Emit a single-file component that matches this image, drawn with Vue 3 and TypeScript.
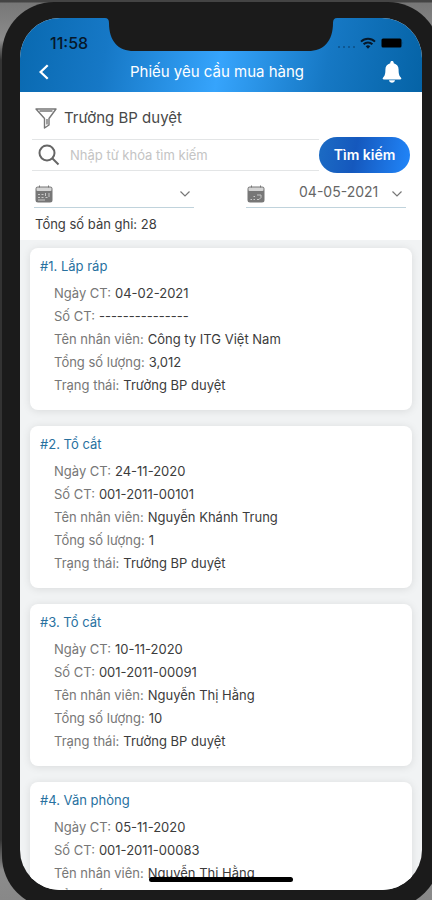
<script setup lang="ts">
import { ref } from 'vue'

interface PurchaseRequest {
  id: number
  title: string
  date: string
  code: string
  employee: string
  quantity: string
  status: string
}

const keyword = ref('')
const fromDate = ref('')
const toDate = ref('04-05-2021')
const total = 28

const requests: PurchaseRequest[] = [
  { id: 1, title: 'Lắp ráp', date: '04-02-2021', code: '---------------', employee: 'Công ty ITG Việt Nam', quantity: '3,012', status: 'Trưởng BP duyệt' },
  { id: 2, title: 'Tổ cắt', date: '24-11-2020', code: '001-2011-00101', employee: 'Nguyễn Khánh Trung', quantity: '1', status: 'Trưởng BP duyệt' },
  { id: 3, title: 'Tổ cắt', date: '10-11-2020', code: '001-2011-00091', employee: 'Nguyễn Thị Hằng', quantity: '10', status: 'Trưởng BP duyệt' },
  { id: 4, title: 'Văn phòng', date: '05-11-2020', code: '001-2011-00083', employee: 'Nguyễn Thị Hằng', quantity: '1', status: 'Trưởng BP duyệt' },
]
</script>

<template>
  <div class="stage">
    <div class="phone">
      <div class="screen">
        <header class="header">
          <div class="status">
            <span class="clock">11:58</span>
            <div class="signals">
              <svg class="dots" viewBox="0 0 18 4" aria-hidden="true">
                <circle cx="2" cy="2" r="1" /><circle cx="7" cy="2" r="1" /><circle cx="12" cy="2" r="1" /><circle cx="17" cy="2" r="1" />
              </svg>
              <svg class="wifi" viewBox="0 0 16 12" aria-hidden="true">
                <path d="M1 4.6a10 10 0 0 1 14 0M3.600 7.300a6.200 6.200 0 0 1 8.800 0" />
                <path class="fill" d="M5.700 9.300a3.300 3.300 0 0 1 4.600 0L8 11.800z" />
              </svg>
              <svg class="battery" viewBox="0 0 23 10" aria-hidden="true">
                <rect x="0.5" y="0.5" width="20" height="9" rx="1.500" /><path class="tip" d="M21.500 3.500q1.400 1.500 0 3z" />
              </svg>
            </div>
          </div>
          <div class="navbar">
            <button class="icon-button" type="button" aria-label="Quay lại">
              <svg class="back" viewBox="0 0 12 16" aria-hidden="true"><path d="M9.300 2 3 8l6.300 6" /></svg>
            </button>
            <h1 class="title">Phiếu yêu cầu mua hàng</h1>
            <button class="icon-button" type="button" aria-label="Thông báo">
              <svg class="bell" viewBox="0 0 20 24" aria-hidden="true">
                <path d="M10 1c1 0 1.700.7 1.700 1.700v.5c3.200.8 4.900 3.200 4.900 6.300 0 5 .8 6.600 2.300 8 .9.9.4 2-.8 2H1.900c-1.200 0-1.700-1.100-.8-2 1.500-1.400 2.300-3 2.300-8 0-3.100 1.700-5.500 4.900-6.300v-.5C8.300 1.700 9 1 10 1z" />
                <path d="M7 20.300h6c-.2 1.500-1.400 2.500-3 2.500s-2.800-1-3-2.500z" />
              </svg>
            </button>
          </div>
        </header>

        <section class="filters">
          <button class="state" type="button">
            <svg class="funnel" viewBox="0 0 22 21" aria-hidden="true"><path d="M1 1h20l-7 9.500V17l-4.500 3v-9.500zM4.500 3h13M12 11v5.500" /></svg>
            <span>Trưởng BP duyệt</span>
          </button>
          <form class="search" @submit.prevent>
            <div class="search-box">
              <svg class="lens" viewBox="0 0 22 22" aria-hidden="true"><circle cx="9" cy="9" r="7.500" /><path d="m14.500 14.500 6 6" /></svg>
              <input v-model="keyword" class="keyword" type="text" aria-label="Từ khóa" placeholder="Nhập từ khóa tìm kiếm" />
            </div>
            <button class="submit" type="submit">Tìm kiếm</button>
          </form>
          <div class="dates">
            <label class="date">
              <svg class="calendar" viewBox="0 0 18 18" aria-hidden="true">
                <rect class="sheet" x="0.500" y="1.500" width="17" height="16" rx="2.500" /><rect class="top" x="1.500" y="2.500" width="15" height="3.500" rx="1" />
                <path class="pins" d="M4.500 0.500v2M13.500 0.500v2" /><path class="days" d="M3 9.500h2M6.500 9.500h2M10.500 8v3M14 8v4M3 12.500h2M6.500 12.500h2M10.500 12.500h2M3 15h7" />
              </svg>
              <select v-model="fromDate" class="picker" aria-label="Từ ngày"><option value=""></option></select>
              <svg class="chevron" viewBox="0 0 12 8" aria-hidden="true"><path d="m1.500 1.500 4.500 4.500 4.500-4.500" /></svg>
            </label>
            <label class="date">
              <svg class="calendar" viewBox="0 0 18 18" aria-hidden="true">
                <rect class="sheet" x="0.500" y="1.500" width="17" height="16" rx="2.500" /><rect class="top" x="1.500" y="2.500" width="15" height="3.500" rx="1" />
                <path class="pins" d="M4.500 0.500v2M13.500 0.500v2" /><path class="days" d="M3.500 14.500H5M6.500 14.500H8M6.500 11.500h1.500M10 10h4v2.500L12 14.500h-2" />
              </svg>
              <select v-model="toDate" class="picker" aria-label="Đến ngày"><option>04-05-2021</option></select>
              <svg class="chevron" viewBox="0 0 12 8" aria-hidden="true"><path d="m1.500 1.500 4.500 4.500 4.500-4.500" /></svg>
            </label>
          </div>
          <p class="total">Tổng số bản ghi: {{ total }}</p>
        </section>

        <main class="list">
          <article v-for="item in requests" :key="item.id" class="card">
            <h2 class="card-title">#{{ item.id }}. {{ item.title }}</h2>
            <dl class="fields">
              <div class="field"><dt>Ngày CT:</dt><dd>{{ item.date }}</dd></div>
              <div class="field"><dt>Số CT:</dt><dd>{{ item.code }}</dd></div>
              <div class="field"><dt>Tên nhân viên:</dt><dd>{{ item.employee }}</dd></div>
              <div class="field"><dt>Tổng số lượng:</dt><dd>{{ item.quantity }}</dd></div>
              <div class="field"><dt>Trạng thái:</dt><dd>{{ item.status }}</dd></div>
            </dl>
          </article>
        </main>
        <svg class="notch" viewBox="0 0 236 35" aria-hidden="true">
          <path d="M0 0v1h2q4 0 4 5c0 18 9 28 25 28h174c16 0 25-10 25-28q0-5 4-5h2V0z" />
        </svg>
        <span class="home-bar"></span>
      </div>
    </div>
  </div>
</template>

<style>
body {
  margin: 0;
}
</style>

<style scoped>
.stage {
  box-sizing: border-box;
  height: 100vh;
  overflow: hidden;
  padding: 2px 0 0 2px;
  background: linear-gradient(#444 0, #444 2px, #777 3px, #8c8c8c 40px, #333 60px, #333 840px, #8c8c8c 870px, #888 100%);
  font-family: Inter, "Liberation Sans", sans-serif;
  color: #3c3c3c;
}

.phone {
  box-sizing: border-box;
  width: calc(100% + 8px);
  height: calc(100vh + 6px);
  padding: 16px 18px 18px;
  border-radius: 52px;
  background: #1b1b1b;
}

.screen {
  position: relative;
  display: flex;
  flex-direction: column;
  height: 100%;
  overflow: hidden;
  border-radius: 40px;
  background: #f1f3f4;
}

.header {
  flex: none;
  background: linear-gradient(100deg, #0969b0 0%, #1678c6 22%, #36a4fc 50%, #1678c4 76%, #0563a6 100%);
  color: #fff;
}

.status {
  display: flex;
  align-items: center;
  justify-content: space-between;
  height: 34px;
  padding: 16px 18px 0 30px;
  box-sizing: border-box;
  color: #06182a;
}

.clock {
  font-size: 16px;
  font-weight: 500;
  line-height: 18px;
}

.signals {
  display: flex;
  align-items: center;
  gap: 5px;
}

.dots {
  width: 18px;
  height: 4px;
  margin-top: 8px;
  fill: #0d4f86;
}

.wifi {
  width: 16px;
  height: 12px;
  fill: none;
  stroke: #06182a;
  stroke-width: 2;
}

.wifi .fill {
  fill: #06182a;
  stroke: none;
}

.battery {
  width: 23px;
  height: 10px;
  fill: #000;
}

.battery .tip {
  fill: #0d4f86;
}

.navbar {
  display: flex;
  align-items: center;
  justify-content: space-between;
  height: 40px;
  padding: 0 20px 0 16px;
}

.icon-button {
  display: flex;
  padding: 0;
  border: 0;
  background: none;
}

.back {
  width: 16px;
  height: 18px;
  fill: none;
  stroke: #fff;
  stroke-width: 2;
}

.bell {
  width: 20px;
  height: 24px;
  fill: #fff;
}

.title {
  margin: 0;
  font-size: 15px;
  font-weight: 400;
  line-height: 20px;
}

.filters {
  flex: none;
  padding: 12px 12px 6px;
  background: #fff;
}

.state {
  display: flex;
  align-items: center;
  gap: 7px;
  padding: 0 0 0 3px;
  border: 0;
  background: none;
  color: #484848;
  font: 400 15px/28px Inter, "Liberation Sans", sans-serif;
}

.funnel {
  width: 22px;
  height: 21px;
  fill: none;
  stroke: #777;
  stroke-width: 1.4;
  stroke-linejoin: round;
}

.search {
  display: flex;
  align-items: center;
  height: 36px;
  margin-top: 5px;
}

.search-box {
  display: flex;
  flex: 1;
  align-items: center;
  gap: 10px;
  height: 30px;
  padding-left: 6px;
  border: solid #e3e5e6;
  border-width: 1px 0;
}

.lens {
  flex: none;
  width: 22px;
  height: 22px;
  fill: none;
  stroke: #666;
  stroke-width: 2;
}

.keyword {
  flex: 1;
  min-width: 0;
  padding: 0;
  border: 0;
  outline: 0;
  background: none;
  font: 400 13px/20px Inter, "Liberation Sans", sans-serif;
}

.keyword::placeholder {
  color: #c4c4c4;
}

.submit {
  width: 91px;
  height: 36px;
  padding: 0;
  border: 0;
  border-radius: 18px;
  background: linear-gradient(100deg, #1c6cc4, #1558bd 40%, #2186fa);
  color: #fff;
  font: 600 14px/20px Inter, "Liberation Sans", sans-serif;
}

.dates {
  display: flex;
  justify-content: space-between;
  gap: 52px;
  margin-top: 8px;
  padding: 0 4px 0 2px;
}

.date {
  display: grid;
  flex: 1;
  grid-template-columns: 20px 1fr 18px;
  align-items: center;
  height: 26px;
  border-bottom: 1px solid #c0d3dc;
}

.calendar {
  grid-area: 1 / 1;
  width: 18px;
  height: 18px;
  margin-left: 1px;
  fill: none;
}

.calendar .sheet {
  fill: #777;
}

.calendar .top {
  fill: #d4d4d4;
}

.calendar .pins {
  stroke: #777;
}

.calendar .days {
  stroke: #c8c8c8;
}

.picker {
  grid-area: 1 / 2 / 2 / 4;
  width: 100%;
  padding: 0 0 4px 33px;
  border: 0;
  outline: 0;
  appearance: none;
  background: none;
  color: #666;
  font: 400 14px/20px Inter, "Liberation Sans", sans-serif;
}

.chevron {
  grid-area: 1 / 3;
  justify-self: center;
  width: 12px;
  height: 8px;
  fill: none;
  stroke: #777;
  stroke-width: 1.2;
  pointer-events: none;
}

.total {
  margin: 6px 0 0 3px;
  font-size: 13px;
  line-height: 20px;
}

.list {
  display: flex;
  flex: 1;
  flex-direction: column;
  gap: 16px;
  min-height: 0;
  overflow: hidden;
  padding: 8px 10px;
}

.card {
  box-sizing: border-box;
  flex: none;
  padding: 8px 10px 13px;
  border-radius: 8px;
  background: #fff;
  box-shadow: 0 1px 8px rgba(0, 0, 0, 0.1);
}

.card-title {
  margin: 0 0 6px;
  color: #28719f;
  font-size: 13px;
  font-weight: 400;
  line-height: 20px;
}

.fields {
  margin: 0;
  padding-left: 14px;
}

.field {
  display: flex;
  gap: 4px;
  font-size: 13px;
  line-height: 23px;
}

.field dt {
  color: #777;
}

.field dd {
  margin: 0;
}

.notch {
  position: absolute;
  top: -1px;
  left: 50%;
  width: 236px;
  height: 35px;
  margin-left: -118px;
  fill: #1b1b1b;
}

.home-bar {
  position: absolute;
  bottom: 8px;
  left: 50%;
  width: 144px;
  height: 5px;
  margin-left: -72px;
  border-radius: 3px;
  background: #000;
}
</style>
